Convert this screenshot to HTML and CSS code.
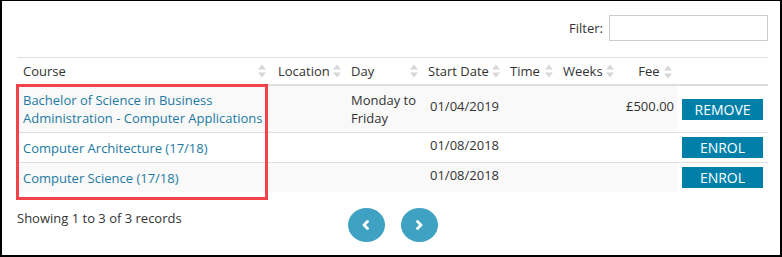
FILE: index.html
```html
<!DOCTYPE html>
<html lang="en">
<head>
  <meta charset="UTF-8" />
  <title>Courses</title>
  <link rel="stylesheet" href="styles.css">
</head>
<body>

  <div class="frame">

    <!-- Filter -->
    <div class="filter">
      <label for="filter">Filter:</label>
      <input type="text" id="filter" />
    </div>

    <!-- Course table -->
    <div class="table-wrap">
      <table class="courses">
        <colgroup>
          <col style="width: 253px">
          <col style="width: 75px">
          <col style="width: 77px">
          <col style="width: 82px">
          <col style="width: 53px">
          <col style="width: 61px">
          <col style="width: 59px">
          <col>
        </colgroup>
        <thead>
          <tr>
            <th>Course <svg class="sort" width="8" height="14" viewBox="0 0 8 14"><path d="M0 5.5 L4 0.5 L8 5.5 Z M0 8.5 L4 13.5 L8 8.5 Z" fill="#d8d8d8"/></svg></th>
            <th class="loc">Location <svg class="sort" width="8" height="14" viewBox="0 0 8 14"><path d="M0 5.5 L4 0.5 L8 5.5 Z M0 8.5 L4 13.5 L8 8.5 Z" fill="#d8d8d8"/></svg></th>
            <th>Day <svg class="sort" width="8" height="14" viewBox="0 0 8 14"><path d="M0 5.5 L4 0.5 L8 5.5 Z M0 8.5 L4 13.5 L8 8.5 Z" fill="#d8d8d8"/></svg></th>
            <th>Start Date <svg class="sort" width="8" height="14" viewBox="0 0 8 14"><path d="M0 5.5 L4 0.5 L8 5.5 Z M0 8.5 L4 13.5 L8 8.5 Z" fill="#d8d8d8"/></svg></th>
            <th>Time <svg class="sort" width="8" height="14" viewBox="0 0 8 14"><path d="M0 5.5 L4 0.5 L8 5.5 Z M0 8.5 L4 13.5 L8 8.5 Z" fill="#d8d8d8"/></svg></th>
            <th>Weeks <svg class="sort" width="8" height="14" viewBox="0 0 8 14"><path d="M0 5.5 L4 0.5 L8 5.5 Z M0 8.5 L4 13.5 L8 8.5 Z" fill="#d8d8d8"/></svg></th>
            <th class="num">Fee <svg class="sort" width="8" height="14" viewBox="0 0 8 14"><path d="M0 5.5 L4 0.5 L8 5.5 Z M0 8.5 L4 13.5 L8 8.5 Z" fill="#d8d8d8"/></svg></th>
            <th class="action"></th>
          </tr>
        </thead>
        <tbody>
          <tr class="odd">
            <td><a href="#">Bachelor of Science in Business Administration - Computer Applications</a></td>
            <td></td>
            <td>Monday to Friday</td>
            <td class="date">01/04/2019</td>
            <td></td>
            <td></td>
            <td class="num date">£500.00</td>
            <td class="action"><button class="btn">Remove</button></td>
          </tr>
          <tr>
            <td><a href="#">Computer Architecture (17/18)</a></td>
            <td></td>
            <td></td>
            <td class="date">01/08/2018</td>
            <td></td>
            <td></td>
            <td class="num"></td>
            <td class="action"><button class="btn">Enrol</button></td>
          </tr>
          <tr class="odd">
            <td><a href="#">Computer Science (17/18)</a></td>
            <td></td>
            <td></td>
            <td class="date">01/08/2018</td>
            <td></td>
            <td></td>
            <td class="num"></td>
            <td class="action"><button class="btn">Enrol</button></td>
          </tr>
        </tbody>
      </table>

      <!-- highlight box around the course column -->
      <div class="highlight"></div>
    </div>

    <!-- Footer: info + paging -->
    <div class="table-foot">
      <div class="info">Showing 1 to 3 of 3 records</div>
      <div class="paging">
        <a href="#" class="page-btn">
          <svg width="10" height="10" viewBox="0 0 10 10"><path d="M6.5 1.5 L3 5 L6.5 8.5" fill="none" stroke="#fff" stroke-width="2.8" stroke-linejoin="round" stroke-linecap="round"/></svg>
        </a>
        <a href="#" class="page-btn">
          <svg width="10" height="10" viewBox="0 0 10 10"><path d="M3.5 1.5 L7 5 L3.5 8.5" fill="none" stroke="#fff" stroke-width="2.8" stroke-linejoin="round" stroke-linecap="round"/></svg>
        </a>
      </div>
      <div></div>
    </div>

  </div>

</body>
</html>
```

FILE: styles.css
```css
body {
  margin: 0;
  font-family: 'Open Sans', 'DejaVu Sans', sans-serif;
  font-size: 13px;
  color: #333;
  background: #fff;
}

.frame {
  width: 782px;
  height: 257px;
  box-sizing: border-box;
  border: 2px solid #000;
  border-top-width: 1px;
  padding: 14px 12px 0 15px;
}

/* Filter */
.filter {
  display: flex;
  justify-content: flex-end;
  align-items: center;
  gap: 6px;
  height: 26px;
  margin-bottom: 16px;
}

.filter label {
  font-size: 13px;
  color: #333;
}

.filter input {
  width: 159px;
  height: 26px;
  box-sizing: border-box;
  border: 1px solid #ccc;
  margin: 0;
  padding: 0 4px;
}

/* Table */
.table-wrap {
  position: relative;
}

.courses {
  width: 100%;
  border-collapse: collapse;
  table-layout: fixed;
}

.courses th {
  height: 26px;
  padding: 0 6px;
  font-weight: normal;
  font-size: 13px;
  line-height: 18px;
  text-align: left;
  border-top: 1px solid #ddd;
  border-bottom: 2px solid #ddd;
  white-space: nowrap;
}

.courses th.loc {
  padding-left: 8px;
}

.courses th .sort {
  float: right;
  margin: 2px -2px 0 0;
}

.courses th.num {
  text-align: right;
}

.courses th.num .sort {
  float: none;
  vertical-align: -3px;
  margin: 0 -1px 0 1px;
}

.courses td {
  padding: 5px 6px;
  line-height: 18px;
  vertical-align: middle;
  border-bottom: 1px solid #ddd;
}

.courses tbody tr:last-child td {
  border-bottom: none;
}

.courses tr.odd td {
  background: #f9f9f9;
}

.courses tr.odd td.action {
  background: #fff;
}

.courses td.date {
  padding-top: 2px;
  padding-bottom: 8px;
  padding-left: 8px;
}

.courses td.num {
  text-align: right;
  padding-right: 5px;
}

.courses td.action {
  padding: 4px 5px;
}

.courses a {
  color: #1d7aa3;
  text-decoration: none;
}

.btn {
  display: block;
  width: 81px;
  height: 21px;
  padding: 0;
  border: none;
  background: #0080a8;
  color: #fff;
  font-family: 'Open Sans', sans-serif;
  font-size: 14px;
  text-transform: uppercase;
  cursor: pointer;
}

.highlight {
  position: absolute;
  left: -1px;
  top: 27px;
  width: 246px;
  height: 110px;
  border: 3px solid #f3424a;
}

/* Footer */
.table-foot {
  display: grid;
  grid-template-columns: 1fr auto 1fr;
  margin-top: 16px;
}

.info {
  font-size: 13px;
  color: #333;
  padding-top: 1px;
}

.paging {
  display: flex;
  gap: 16px;
}

.page-btn {
  display: flex;
  align-items: center;
  justify-content: center;
  width: 37px;
  height: 34px;
  border-radius: 50%;
  background: #3fa2c2;
}
```
